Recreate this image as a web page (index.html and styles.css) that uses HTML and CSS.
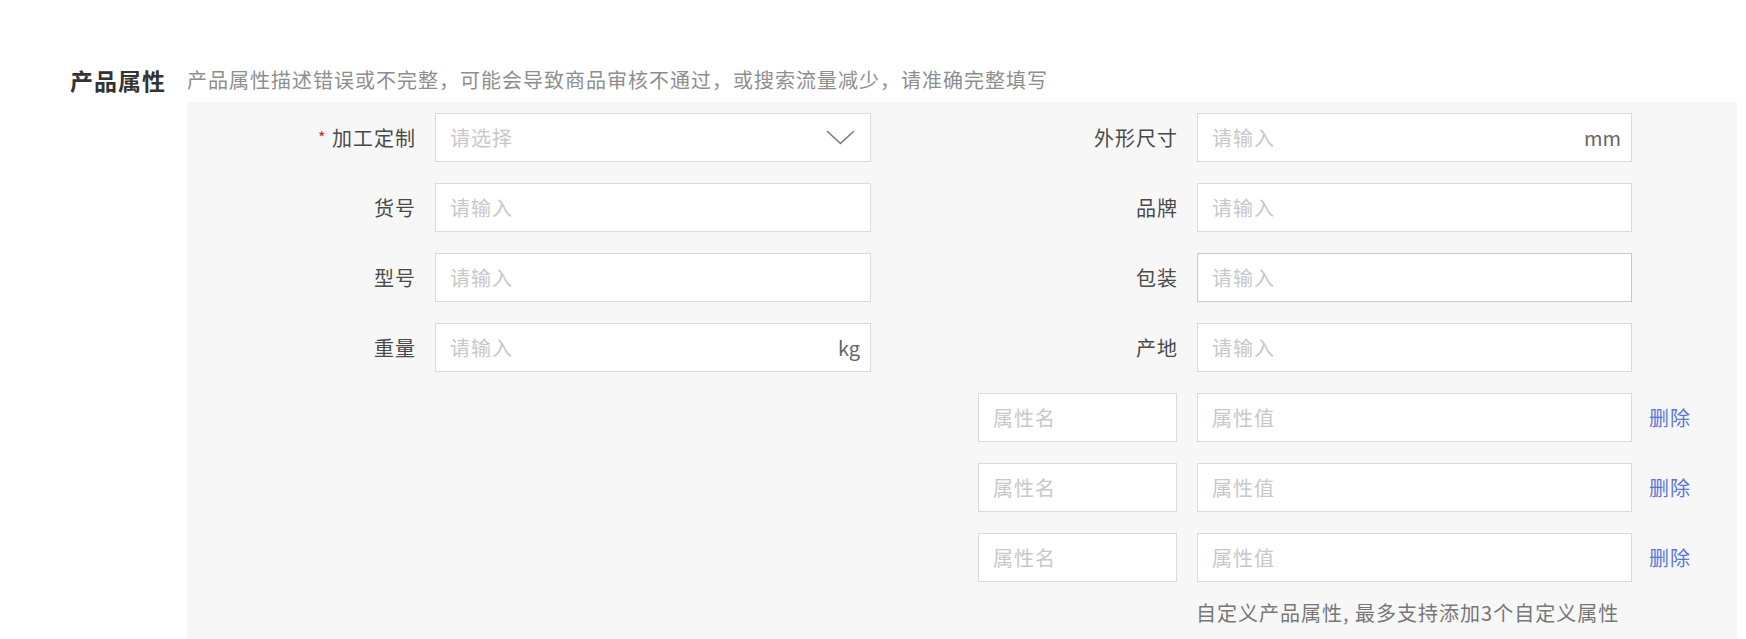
FILE: index.html
```html
<!DOCTYPE html>
<html lang="zh-CN">
<head>
    <meta charset="UTF-8">
    <meta name="viewport" content="width=device-width, initial-scale=1.0">
    <title>产品属性</title>
    <link rel="stylesheet" href="styles.css">
</head>
<body>
    <section class="attr-section">
        <div class="attr-header">
            <h2 class="attr-title">产品属性</h2>
            <span class="attr-hint">产品属性描述错误或不完整，可能会导致商品审核不通过，或搜索流量减少，请准确完整填写</span>
        </div>

        <div class="attr-panel">
            <div class="attr-col col-left">
                <div class="field">
                    <label class="field-label"><span class="required">*</span> 加工定制</label>
                    <div class="input-box select-box">
                        <span class="select-placeholder">请选择</span>
                        <svg class="chevron" width="29" height="15" viewBox="0 0 29 15" fill="none" stroke="#7a7a7a" stroke-width="1.6" stroke-linecap="round" stroke-linejoin="round">
                            <path d="M1.5 1.5 L14.5 13.5 L27.5 1.5"></path>
                        </svg>
                    </div>
                </div>
                <div class="field">
                    <label class="field-label">货号</label>
                    <div class="input-box"><input type="text" placeholder="请输入"></div>
                </div>
                <div class="field">
                    <label class="field-label">型号</label>
                    <div class="input-box"><input type="text" placeholder="请输入"></div>
                </div>
                <div class="field">
                    <label class="field-label">重量</label>
                    <div class="input-box"><input type="text" placeholder="请输入"><span class="unit">kg</span></div>
                </div>
            </div>

            <div class="attr-col col-right">
                <div class="field">
                    <label class="field-label">外形尺寸</label>
                    <div class="input-box"><input type="text" placeholder="请输入"><span class="unit">mm</span></div>
                </div>
                <div class="field">
                    <label class="field-label">品牌</label>
                    <div class="input-box"><input type="text" placeholder="请输入"></div>
                </div>
                <div class="field">
                    <label class="field-label">包装</label>
                    <div class="input-box focused"><input type="text" placeholder="请输入"></div>
                </div>
                <div class="field">
                    <label class="field-label">产地</label>
                    <div class="input-box"><input type="text" placeholder="请输入"></div>
                </div>

                <div class="custom-row">
                    <div class="input-box name-box"><input type="text" placeholder="属性名"></div>
                    <div class="input-box"><input type="text" placeholder="属性值"></div>
                    <a href="#" class="delete-link">删除</a>
                </div>
                <div class="custom-row">
                    <div class="input-box name-box"><input type="text" placeholder="属性名"></div>
                    <div class="input-box"><input type="text" placeholder="属性值"></div>
                    <a href="#" class="delete-link">删除</a>
                </div>
                <div class="custom-row">
                    <div class="input-box name-box"><input type="text" placeholder="属性名"></div>
                    <div class="input-box"><input type="text" placeholder="属性值"></div>
                    <a href="#" class="delete-link">删除</a>
                </div>

                <p class="custom-note">自定义产品属性, 最多支持添加3个自定义属性</p>
            </div>
        </div>
    </section>
</body>
</html>
```

FILE: styles.css
```css
/* Product attributes section */
body {
    margin: 0;
    background-color: #fff;
    font-family: "Noto Sans CJK SC", "Noto Sans", sans-serif;
    color: #555;
}

.attr-section {
    padding-top: 64px;
}

.attr-header {
    display: flex;
    align-items: center;
    height: 32px;
    padding-left: 70px;
}

.attr-title {
    margin: 0;
    font-size: 23px;
    font-weight: 700;
    letter-spacing: 1px;
    color: #333;
    line-height: 32px;
}

.attr-hint {
    margin-left: 21px;
    font-size: 20px;
    letter-spacing: 1px;
    color: #8e8e8e;
    line-height: 32px;
}

.attr-panel {
    display: flex;
    align-items: flex-start;
    margin-top: 6px;
    margin-left: 187px;
    width: 1550px;
    padding: 11px 0 30px;
    background-color: #f7f7f7;
}

.attr-col {
    display: flex;
    flex-direction: column;
    gap: 21px;
}

.col-left {
    width: 684px;
}

.field {
    display: flex;
    align-items: center;
}

.field-label {
    box-sizing: border-box;
    width: 248px;
    padding-right: 19px;
    text-align: right;
    font-size: 20px;
    letter-spacing: 1px;
    color: #4a4a4a;
}

.col-right .field-label {
    width: 326px;
    padding-right: 19px;
}

.required {
    color: #c62b2b;
    font-size: 16px;
    position: relative;
    top: -2px;
}

.input-box {
    box-sizing: border-box;
    display: flex;
    align-items: center;
    width: 436px;
    height: 49px;
    padding: 0 10px 0 14px;
    background-color: #fff;
    border: 1px solid #dadada;
}

.col-right .input-box {
    width: 435px;
}

.input-box.focused {
    border-color: #c4c9d9;
}

.input-box input {
    flex: 1;
    min-width: 0;
    border: none;
    outline: none;
    padding: 0;
    background: transparent;
    font-family: inherit;
    font-size: 20px;
    letter-spacing: 1px;
    color: #333;
}

.input-box input::placeholder {
    color: #c8c8c8;
}

.unit {
    font-size: 20px;
    color: #666;
}

.select-box {
    justify-content: space-between;
    padding-right: 15px;
}

.select-placeholder {
    font-size: 20px;
    letter-spacing: 1px;
    color: #c8c8c8;
}

.chevron {
    display: block;
}

.custom-row {
    display: flex;
    align-items: center;
    padding-left: 107px;
}

.col-right .name-box {
    width: 199px;
    margin-right: 20px;
}

.delete-link {
    margin-left: 17px;
    font-size: 20px;
    letter-spacing: 1px;
    color: #5a74d8;
    text-decoration: none;
}

.custom-note {
    margin: 0;
    padding-left: 325px;
    font-size: 20px;
    line-height: 20px;
    letter-spacing: 1px;
    color: #777;
}
```
